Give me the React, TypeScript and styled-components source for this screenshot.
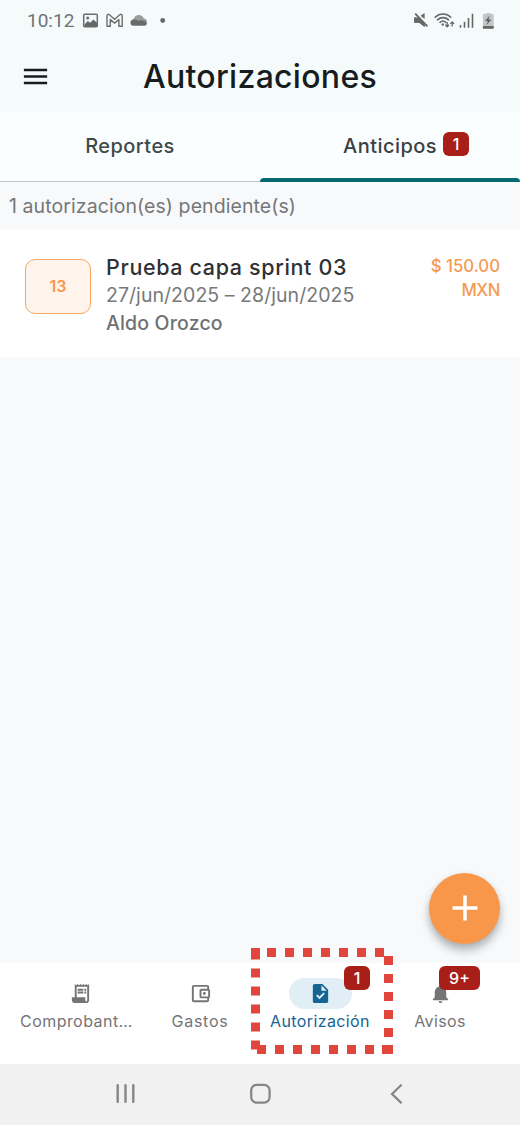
import React from "react";
import styled, { createGlobalStyle, css } from "styled-components";
import {
  MdMenu,
  MdNotifications,
  MdOutlineAccountBalanceWallet,
  MdReceiptLong,
  MdTask,
} from "react-icons/md";

const GlobalStyle = createGlobalStyle`
  *, *::before, *::after { box-sizing: border-box; }
  body { margin: 0; background: #f7f9fb; }
`;

const Screen = styled.div`
  position: relative;
  display: flex;
  flex-direction: column;
  width: 520px;
  height: 1125px;
  overflow: hidden;
  background: #f7f9fb;
  font-family: Inter, "Open Sans", sans-serif;
`;

const StatusBar = styled.div`
  display: flex;
  justify-content: space-between;
  height: 42px;
  padding: 0 24px 0 27px;
  background: #f5fbfb;
`;

const StatusGroup = styled.div`
  display: flex;
  align-items: center;
  height: 40px;
`;

const Clock = styled.span`
  width: 54px;
  font-family: Roboto, sans-serif;
  font-size: 19px;
  line-height: 22px;
  color: #707373;
  padding-top: 2px;
`;

const Header = styled.header`
  display: grid;
  grid-template-columns: 70px 1fr 70px;
  align-items: center;
  height: 70px;
  padding-bottom: 2px;
  background: #f5fbfb;
`;

const MenuButton = styled.button`
  display: flex;
  align-items: center;
  justify-content: center;
  width: 71px;
  height: 40px;
  padding: 0;
  border: 0;
  background: none;
  color: #171d1e;
`;

const Title = styled.h1`
  margin: 0;
  padding-top: 2px;
  text-align: center;
  font-size: 32px;
  line-height: 40px;
  font-weight: 480;
  letter-spacing: 0.3px;
  color: #171d1e;
  white-space: nowrap;
`;

const Tabs = styled.div`
  display: grid;
  grid-template-columns: 1fr 1fr;
  height: 70px;
  background: #fafefe;
`;

const Tab = styled.div<{ $active?: boolean }>`
  display: flex;
  justify-content: center;
  align-items: flex-start;
  position: relative;
  padding-top: 21px;
  font-size: 20px;
  line-height: 26px;
  font-weight: 460;
  letter-spacing: 0.45px;
  color: ${(p) => (p.$active ? "#3c4043" : "#3f4949")};
  border-bottom: 1px solid #b9c6c6;

  ${(p) =>
    p.$active &&
    css`
      border-bottom: 0;
      &::after {
        content: "";
        position: absolute;
        left: 0;
        right: 0;
        bottom: 0;
        height: 4px;
        border-radius: 4px 4px 0 0;
        background: #05696f;
      }
    `}
`;

const TabLabel = styled.span`
  position: relative;
`;

const Badge = styled.span<{ $x: number; $y: number; $wide?: boolean }>`
  position: absolute;
  left: ${(p) => p.$x}px;
  top: ${(p) => p.$y}px;
  width: ${(p) => (p.$wide ? 41 : 26)}px;
  height: 24px;
  border-radius: 6px;
  background: #a81f1a;
  color: #fff;
  text-align: center;
  font-size: 16px;
  font-weight: 450;
  line-height: 24px;
  letter-spacing: 0;
`;

const Summary = styled.p`
  margin: 0;
  height: 48px;
  padding-left: 9px;
  font-size: 19.5px;
  line-height: 48px;
  letter-spacing: 0.08px;
  color: #757779;
`;

const Card = styled.article`
  display: flex;
  align-items: flex-start;
  height: 127px;
  padding: 0 20px 0 25px;
  background: #fff;
`;

const DayBox = styled.div`
  width: 66px;
  height: 55px;
  margin-top: 29px;
  border: 1.5px solid #f5a863;
  border-radius: 10px;
  background: #fff4eb;
  color: #f8974a;
  font-size: 16px;
  font-weight: 600;
  line-height: 53px;
  text-align: center;
`;

const Details = styled.div`
  flex: 1;
  padding: 23px 0 0 15px;
  line-height: 28px;
  font-size: 19.5px;
  white-space: nowrap;
`;

const Name = styled.div`
  font-size: 21.5px;
  font-weight: 450;
  letter-spacing: 0.64px;
  color: #2f3133;
`;

const Dates = styled.div`
  letter-spacing: 0.05px;
  color: #77797b;
`;

const Person = styled.div`
  font-weight: 450;
  letter-spacing: 0.17px;
  color: #6f7173;
`;

const Amount = styled.div`
  padding-top: 24px;
  font-size: 16.8px;
  line-height: 24px;
  font-weight: 450;
  text-align: right;
  color: #f49b56;
`;

const Currency = styled.div`
  letter-spacing: -0.4px;
`;

const Content = styled.main`
  flex: 1;
`;

const Fab = styled.button`
  position: absolute;
  left: 429px;
  top: 872.5px;
  display: flex;
  align-items: center;
  justify-content: center;
  width: 71px;
  height: 71px;
  padding: 0;
  border: 0;
  border-radius: 50%;
  background: #f8974a;
  box-shadow: 0 7px 10px rgba(0, 0, 0, 0.24), 0 2px 7px rgba(0, 0, 0, 0.1);
`;

const BottomNav = styled.nav`
  display: grid;
  grid-template-columns: repeat(4, 120px);
  justify-content: center;
  height: 101px;
  background: #fff;
`;

const NavItem = styled.div<{ $active?: boolean }>`
  position: relative;
  display: flex;
  flex-direction: column;
  align-items: center;
  padding-top: 15px;
  color: ${(p) => (p.$active ? "#146594" : "#737577")};
`;

const Pill = styled.div<{ $active?: boolean }>`
  display: flex;
  align-items: center;
  justify-content: center;
  width: 63px;
  height: 31px;
  border-radius: 15.5px;
  background: ${(p) => (p.$active ? "#e1eef6" : "transparent")};
`;

const NavLabel = styled.span<{ $tracking: number; $start?: boolean }>`
  align-self: ${(p) => (p.$start ? "flex-start" : "center")};
  margin-top: 2px;
  font-size: 16px;
  line-height: 20px;
  font-weight: 440;
  letter-spacing: ${(p) => p.$tracking}px;
  white-space: nowrap;
`;

const SystemBar = styled.div`
  display: flex;
  justify-content: space-between;
  height: 61px;
  padding: 19px 117px 0 116px;
  background: #f1f1f1;
`;

const HomeIcon = styled.svg`
  margin-left: -4px;
`;

const Highlight = styled.svg`
  position: absolute;
  left: 251px;
  top: 948px;
`;

const StatusLeftIcons = () => (
  <svg width="90" height="20" viewBox="81 10 90 20" fill="none">
    <rect x="83.7" y="14.2" width="13.6" height="12.6" rx="1" stroke="#6b6d6d" strokeWidth="1.5" />
    <path d="M84.5 24.5l3.3-3.6 2.3 1.8 3.4-3.2 3.6 3.4v3.4H84.5z" fill="#666868" />
    <circle cx="87.7" cy="17.9" r="1.5" fill="#6b6d6d" />
    <path
      d="M107 26.2V15.6c0-1.5 1.5-1.6 2.4-.8l5.2 4.4 5.2-4.4c.9-.8 2.4-.7 2.4.8v10.6h-3.3v-6.7l-4.3 3.6-4.3-3.6v6.7z"
      stroke="#6b6d6d"
      strokeWidth="1.4"
      strokeLinejoin="round"
    />
    <path d="M133.500 21c0-3.600 2.300-5.900 5.300-5.900 2.500 0 4.300 1.400 4.900 3.400 2.100.2 3.300 1.500 3.300 3.500z" fill="#9b9d9d" />
    <path d="M133.500 25.700c-1.900 0-3.100-1.100-3.100-2.900 0-2 1.500-3.600 3.600-3.600 1.800 0 2.900.8 4.300 1.700 1.300-.6 2.300-.7 3.700-.5 3 .3 4.900 1 4.900 2.900 0 1.400-1 2.400-2.500 2.400z" fill="#696b6b" />
    <circle cx="162.700" cy="20.500" r="2.400" fill="#666868" />
  </svg>
);

const StatusRightIcons = () => (
  <svg width="84" height="20" viewBox="412 10 84 20" fill="none">
    <path d="M414.300 17.500h1.700l8.600 7v2.500l-5.300-4.300h-5z" fill="#666868" />
    <path d="M414.300 17.500h4.500l5.800 6.200v3.300l-5.300-4.300h-5z" fill="#666868" />
    <path d="M424.600 13v6l-4-3.200z" fill="#666868" />
    <path d="M415.200 13.700l12.200 12.600" stroke="#666868" strokeWidth="1.900" />
    <g stroke="#666868" strokeWidth="1.600" strokeLinecap="round">
      <path d="M435.200 17.200a11 11 0 0 1 15.600 0" />
      <path d="M437.500 19.800a8 8 0 0 1 11 0" />
      <path d="M440 22.300a4.400 4.400 0 0 1 5.800 0" />
    </g>
    <circle cx="442.800" cy="24.500" r="1.200" fill="#666868" />
    <g stroke="#666868" strokeWidth="1.300">
      <path d="M447.200 22v4.500M445.300 24.700l1.900 2 1.900-2" />
      <path d="M452.200 26.500v-4.500M450.300 23.900l1.900-2 1.900 2" />
    </g>
    <path d="M460.500 25v2.800M464.500 21.800v6M468.500 18v9.800M472.500 13.800v14" stroke="#666868" strokeWidth="1.600" />
    <path d="M486 14v-1h4.500v1h2.200c.6 0 1 .4 1 1v12.700c0 .6-.4 1-1 1h-8.800c-.6 0-1-.4-1-1V15c0-.6.4-1 1-1z" fill="#c3c6c6" />
    <path d="M482.900 25.900h10.800v1.800c0 .6-.4 1-1 1h-8.800c-.6 0-1-.4-1-1z" fill="#666868" />
    <path d="M489.700 15.500l-4.600 5.600h2.700l-1.200 4 4.800-5.600h-2.900z" fill="#5d5f5f" />
  </svg>
);

export default function App() {
  return (
    <>
      <GlobalStyle />
      <Screen>
        <StatusBar>
          <StatusGroup>
            <Clock>10:12</Clock>
            <StatusLeftIcons />
          </StatusGroup>
          <StatusGroup>
            <StatusRightIcons />
          </StatusGroup>
        </StatusBar>

        <Header>
          <MenuButton aria-label="Menú">
            <MdMenu size={31} />
          </MenuButton>
          <Title>Autorizaciones</Title>
        </Header>

        <Tabs>
          <Tab>
            <TabLabel>Reportes</TabLabel>
          </Tab>
          <Tab $active>
            <TabLabel>
              Anticipos
              <Badge $x={100} $y={-1}>1</Badge>
            </TabLabel>
          </Tab>
        </Tabs>

        <Content>
          <Summary>1 autorizacion(es) pendiente(s)</Summary>
          <Card>
            <DayBox>13</DayBox>
            <Details>
              <Name>Prueba capa sprint 03</Name>
              <Dates>27/jun/2025 – 28/jun/2025</Dates>
              <Person>Aldo Orozco</Person>
            </Details>
            <Amount>
              <div>$ 150.00</div>
              <Currency>MXN</Currency>
            </Amount>
          </Card>
        </Content>

        <BottomNav>
          <NavItem>
            <Pill>
              <MdReceiptLong size={23} />
            </Pill>
            <NavLabel $tracking={0.45} $start>Comprobant…</NavLabel>
          </NavItem>
          <NavItem>
            <Pill>
              <MdOutlineAccountBalanceWallet size={23} />
            </Pill>
            <NavLabel $tracking={0.75}>Gastos</NavLabel>
          </NavItem>
          <NavItem $active>
            <Pill $active>
              <MdTask size={23} />
            </Pill>
            <NavLabel $tracking={0.38}>Autorización</NavLabel>
            <Badge $x={84} $y={3}>1</Badge>
          </NavItem>
          <NavItem>
            <Pill>
              <MdNotifications size={23} />
            </Pill>
            <NavLabel $tracking={0.35}>Avisos</NavLabel>
            <Badge $x={59} $y={3} $wide>9+</Badge>
          </NavItem>
        </BottomNav>

        <SystemBar>
          <svg width="19" height="22" viewBox="0 0 19 22" stroke="#858585" strokeWidth="2.400" strokeLinecap="round">
            <path d="M1.700 2.200v16.600M9.500 2.200v16.600M17.300 2.200v16.600" />
          </svg>
          <HomeIcon width="21" height="22" viewBox="0 0 21 22" fill="none" stroke="#858585" strokeWidth="2.200">
            <rect x="1.200" y="1.800" width="18.400" height="17.800" rx="5.500" />
          </HomeIcon>
          <svg width="13" height="22" viewBox="0 0 13 22" fill="none" stroke="#858585" strokeWidth="2.200" strokeLinecap="round">
            <path d="M11 2.200L2 11l9 8.600" />
          </svg>
        </SystemBar>

        <Fab aria-label="Agregar">
          <svg width="26" height="26" viewBox="0 0 26 26" stroke="#fff" strokeWidth="3.500">
            <path d="M13 .5v25M.5 13h25" />
          </svg>
        </Fab>

        <Highlight width="142" height="106" viewBox="0 0 142 106" fill="none" stroke="#e0463c" strokeWidth="9">
          <path d="M-2 4.500H133" strokeDasharray="9 9" />
          <path d="M137.500 8V106" strokeDasharray="9 9" />
          <path d="M4.500 2.500V102" strokeDasharray="9 9" />
          <path d="M6 101.500H142" strokeDasharray="9 9" />
          <path d="M0 4.500H9M131 101.500H142" />
        </Highlight>
      </Screen>
    </>
  );
}
